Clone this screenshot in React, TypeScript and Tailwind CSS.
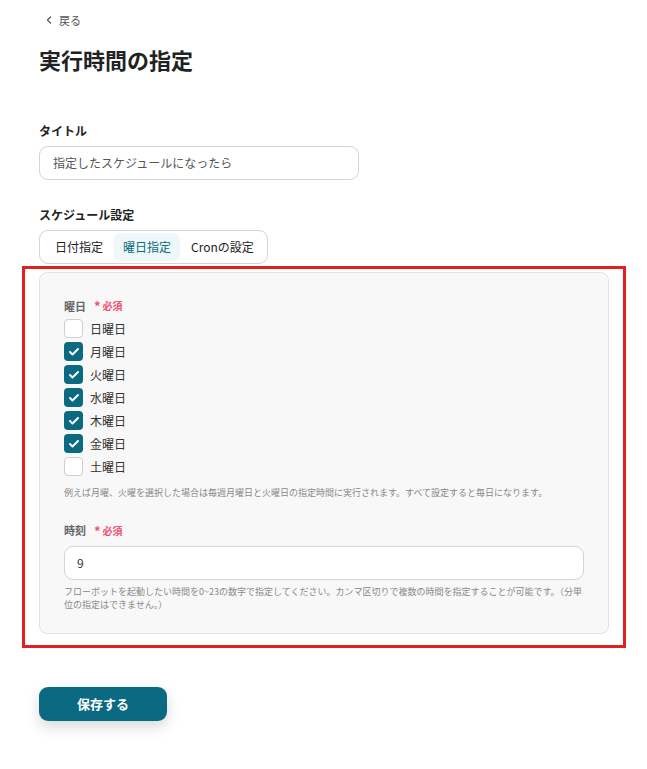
import { ChevronLeft, Check } from "lucide-react";

const days: { label: string; checked: boolean }[] = [
  { label: "日曜日", checked: false },
  { label: "月曜日", checked: true },
  { label: "火曜日", checked: true },
  { label: "水曜日", checked: true },
  { label: "木曜日", checked: true },
  { label: "金曜日", checked: true },
  { label: "土曜日", checked: false },
];

function Required() {
  return (
    <span className="ml-2 flex items-center text-[10px] font-bold text-[#f0506e]">
      <span className="mr-0.5 text-[13px] leading-none">*</span>必須
    </span>
  );
}

export default function App() {
  return (
    <div
      className="min-h-[769px] w-[647px] bg-white text-[#333]"
      style={{ fontFamily: '"Noto Sans CJK JP", "Noto Sans", sans-serif' }}
    >
      <div className="px-[39px] pt-[12px]">
        <button className="ml-[4px] flex items-center gap-1 text-[11px] text-[#555]">
          <ChevronLeft className="size-3" strokeWidth={2.5} />
          戻る
        </button>
        <h1 className="mt-[14px] text-[22px] font-bold leading-[32px] text-[#222]">実行時間の指定</h1>

        <div className="mt-[47px] text-[12px] font-bold leading-[18px] text-[#222]">タイトル</div>
        <div className="mt-[6px] flex h-[34px] w-[320px] items-center rounded-[9px] border border-[#d4d4d8] px-[13px] text-[12px] text-[#555]">
          指定したスケジュールになったら
        </div>

        <div className="mt-[26px] text-[12px] font-bold leading-[18px] text-[#222]">スケジュール設定</div>
        <div className="mt-[6px] flex h-[34px] w-[229px] items-center gap-[2px] whitespace-nowrap rounded-[9px] border border-[#d4d4d8] px-[6px] text-[12px]">
          <span className="px-[9px] py-[6px] leading-[16px] text-[#222]">日付指定</span>
          <span className="rounded-[6px] bg-[#eff8f8] px-[9px] py-[6px] leading-[16px] text-[#0c6a80]">曜日指定</span>
          <span className="px-[9px] py-[6px] leading-[16px] text-[#222]">Cronの設定</span>
        </div>
      </div>

      <div className="ml-[22px] mt-[2px] w-[604px] border-[3px] border-[#e3201f] pb-[11px] pl-[14px] pr-[14px] pt-[3px]">
        <div className="rounded-[8px] border border-[#e3e3e3] bg-[#f8f8f8] px-[24px] pb-[22px] pt-[25px]">
          <div className="flex items-center text-[11px] font-bold text-[#666]">
            曜日
            <Required />
          </div>
          <div className="mt-[5px] flex flex-col gap-[4px]">
            {days.map((d) => (
              <label key={d.label} className="flex h-[19px] items-center gap-[7px] text-[12px] text-[#333]">
                {d.checked ? (
                  <span className="flex size-[19px] items-center justify-center rounded-[4px] bg-[#0c6a80]">
                    <Check className="size-3 text-white" strokeWidth={4} />
                  </span>
                ) : (
                  <span className="size-[19px] rounded-[4px] border border-[#cfcfcf] bg-white" />
                )}
                {d.label}
              </label>
            ))}
          </div>
          <p className="mt-[10px] text-[9px] leading-[14px] text-[#888]">
            例えば月曜、火曜を選択した場合は毎週月曜日と火曜日の指定時間に実行されます。すべて設定すると毎日になります。
          </p>

          <div className="mt-[22px] flex items-center text-[11px] font-bold text-[#666]">
            時刻
            <Required />
          </div>
          <div className="mt-[7px] flex h-[34px] items-center rounded-[9px] border border-[#d4d4d8] bg-white px-[12px] text-[12px] text-[#333]">
            9
          </div>
          <p className="mt-[5px] text-[9px] leading-[13px] text-[#888]">
            フローボットを起動したい時間を0~23の数字で指定してください。カンマ区切りで複数の時間を指定することが可能です。（分単位の指定はできません。）
          </p>
        </div>
      </div>

      <div className="px-[39px] pt-[39px]">
        <button className="h-[34px] w-[128px] rounded-[9px] bg-[#0b6a82] text-[13px] font-bold text-white shadow-[0_6px_14px_rgba(0,0,0,0.15)]">
          保存する
        </button>
      </div>
    </div>
  );
}
